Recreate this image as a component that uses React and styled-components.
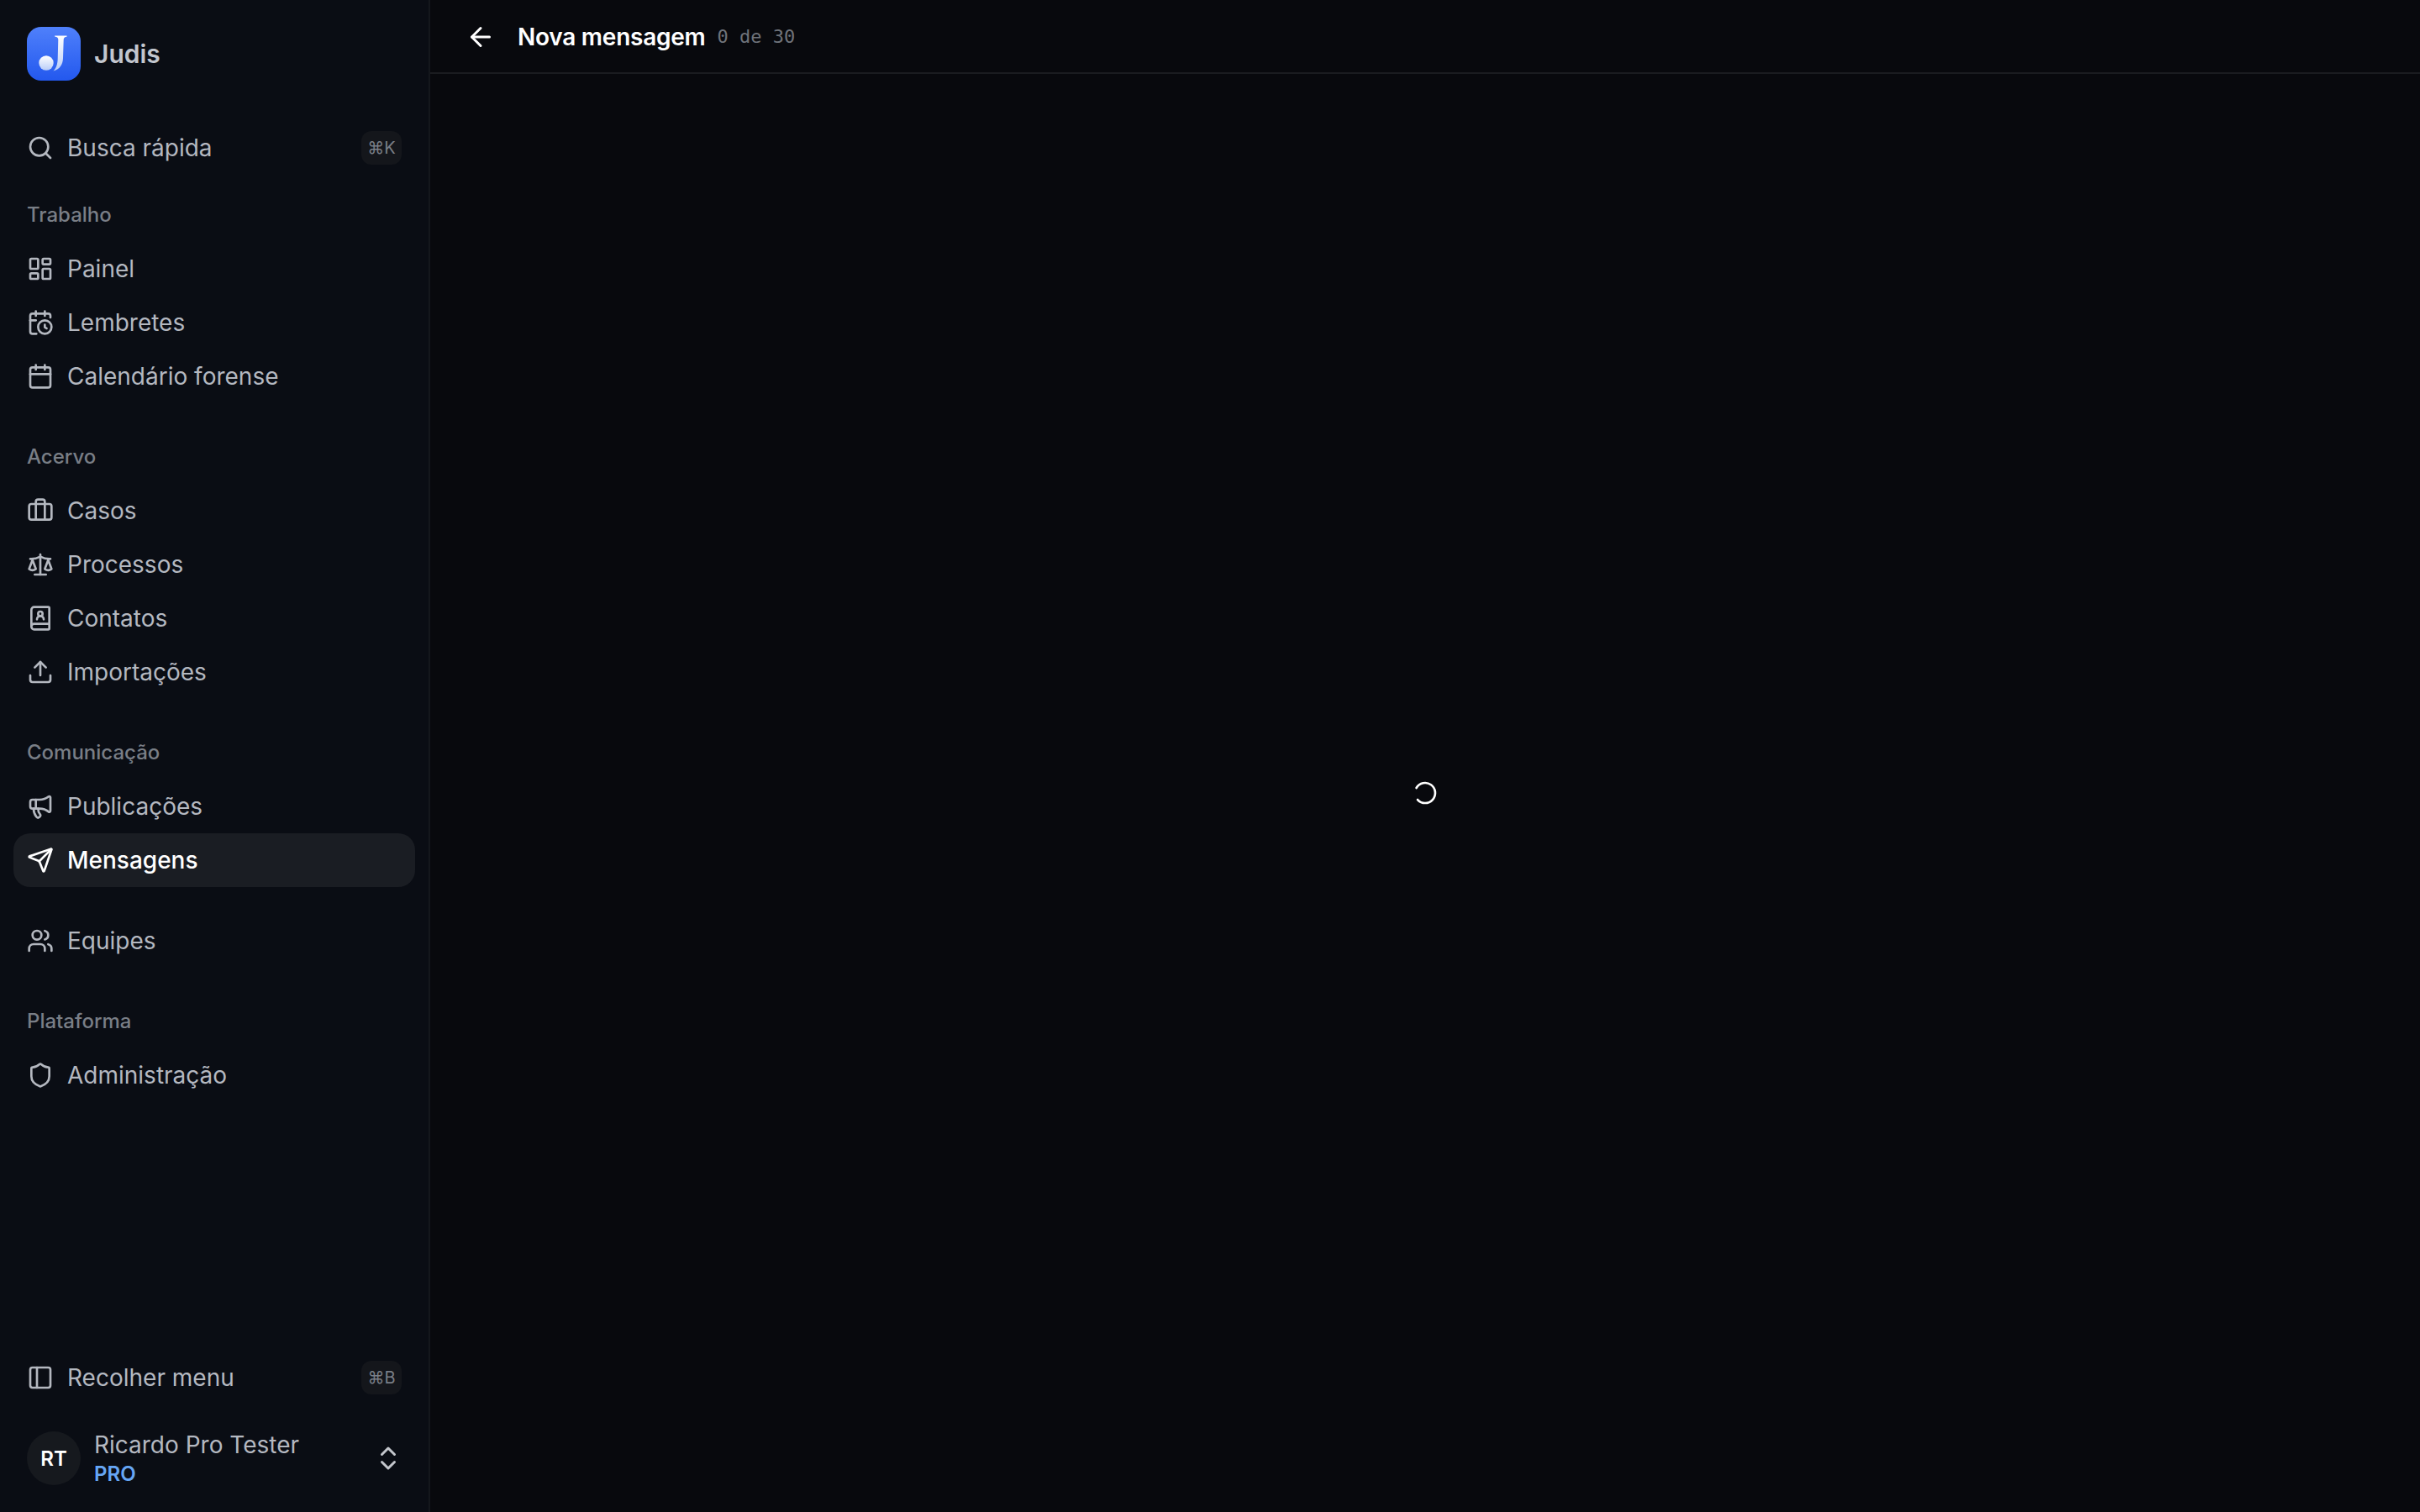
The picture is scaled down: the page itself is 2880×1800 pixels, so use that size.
import React from "react";
import styled, { createGlobalStyle } from "styled-components";
import {
  Search, LayoutDashboard, CalendarClock, Calendar, Briefcase, Scale, BookUser, Upload,
  Megaphone, Send, Users, Shield, PanelLeft, ChevronsUpDown, ArrowLeft, LoaderCircle,
} from "lucide-react";

const Global = createGlobalStyle`
  html, body { margin: 0; padding: 0; background: #08090d; }
  * { box-sizing: border-box; }
  body { font-family: Inter, "Noto Sans", sans-serif; -webkit-font-smoothing: antialiased; }
`;

const Shell = styled.div`
  display: flex;
  width: 100%;
  height: 100vh;
  background: #08090d;
  overflow: hidden;
`;
const Sidebar = styled.aside`
  display: flex;
  flex-direction: column;
  flex: 0 0 512px;
  height: 100%;
  padding: 32px 16px 32px;
  background: #0a0d14;
  border-right: 2px solid #14171c;
`;
const Brand = styled.div`
  display: flex;
  align-items: center;
  gap: 16px;
  height: 64px;
  padding-left: 16px;
  margin-bottom: 48px;
`;
const BrandName = styled.span`
  font-size: 30px;
  font-weight: 600;
  color: #c2c6ce;
`;
const Nav = styled.nav`
  display: flex;
  flex-direction: column;
`;
const Section = styled.div`
  display: flex;
  flex-direction: column;
  margin-top: ${(p) => p.$top}px;
`;
const SectionLabel = styled.div`
  display: flex;
  align-items: center;
  height: 64px;
  padding: 0 0 2px 16px;
  font-size: 24px;
  font-weight: 500;
  color: #797e86;
`;
const Item = styled.div`
  display: flex;
  align-items: center;
  gap: 16px;
  height: 64px;
  padding: 0 16px;
  border-radius: 20px;
  font-size: 28px;
  font-weight: ${(p) => (p.$active ? 500 : 400)};
  color: ${(p) => (p.$active ? "#ffffff" : "#b4b8c0")};
  background: ${(p) => (p.$active ? "#1a1d23" : "transparent")};
  svg { flex: 0 0 32px; }
`;
const ItemText = styled.span`
  flex: 1;
  white-space: nowrap;
`;
const Kbd = styled.kbd`
  display: flex;
  align-items: center;
  justify-content: center;
  width: 48px;
  height: 40px;
  border-radius: 12px;
  background: #14161b;
  color: #797e86;
  font-family: Inter, "DejaVu Sans", sans-serif;
  font-size: 20px;
`;
const Footer = styled.div`
  display: flex;
  flex-direction: column;
  gap: 32px;
  margin-top: auto;
`;
const UserRow = styled.div`
  display: flex;
  align-items: center;
  gap: 16px;
  height: 64px;
  padding: 0 14px 0 16px;
`;
const Avatar = styled.div`
  display: flex;
  align-items: center;
  justify-content: center;
  flex: 0 0 64px;
  height: 64px;
  border-radius: 50%;
  background: #16191e;
  color: #ffffff;
  font-size: 24px;
  font-weight: 600;
`;
const UserInfo = styled.div`
  display: flex;
  flex-direction: column;
  flex: 1;
`;
const UserName = styled.span`
  font-size: 28px;
  line-height: 38px;
  color: #b4b8c0;
  white-space: nowrap;
`;
const Plan = styled.span`
  font-size: 24px;
  line-height: 32px;
  font-weight: 600;
  color: #66a6f5;
`;
const Main = styled.main`
  display: flex;
  flex-direction: column;
  flex: 1;
  min-width: 0;
`;
const Header = styled.header`
  display: flex;
  align-items: center;
  flex: 0 0 88px;
  padding: 1px 42px 0;
  border-bottom: 2px solid #1a1c20;
`;
const Title = styled.h1`
  margin: 0 0 0 26px;
  font-size: 28px;
  font-weight: 600;
  letter-spacing: -0.25px;
  color: #ffffff;
`;
const Counter = styled.span`
  margin-left: 14px;
  font-family: "DejaVu Sans Mono", monospace;
  font-size: 22px;
  color: #6f737a;
`;
const Body = styled.div`
  display: flex;
  flex: 1;
  align-items: center;
  justify-content: center;
  svg { transform: rotate(210deg); }
`;

function Logo() {
  return (
    <svg width="64" height="64" viewBox="0 0 64 64">
      <defs>
        <linearGradient id="lg" x1="0" y1="0" x2="0" y2="1">
          <stop offset="0" stopColor="#4f80fb" />
          <stop offset="1" stopColor="#2358ee" />
        </linearGradient>
        <linearGradient id="lj" x1="0" y1="0" x2="0" y2="1">
          <stop offset="0" stopColor="#ffffff" />
          <stop offset="1" stopColor="#b9cdf8" />
        </linearGradient>
      </defs>
      <rect width="64" height="64" rx="17" fill="url(#lg)" />
      <path d="M33 10.5h14.500v1.300c-2.600.3-3.600 1.200-3.800 3.500l-.7 22c-.3 7.500-3.500 13-11.500 15.300 3.300-3.400 5-7.800 5.200-14.500l.6-22.800c0-2.200-1.200-3.200-3.800-3.500z" fill="url(#lj)" />
      <circle cx="23" cy="43" r="8.700" fill="url(#lj)" />
    </svg>
  );
}

const groups = [
  { top: 16, label: "Trabalho", items: [["Painel", LayoutDashboard], ["Lembretes", CalendarClock], ["Calendário forense", Calendar]] },
  { top: 32, label: "Acervo", items: [["Casos", Briefcase], ["Processos", Scale], ["Contatos", BookUser], ["Importações", Upload]] },
  { top: 32, label: "Comunicação", items: [["Publicações", Megaphone], ["Mensagens", Send, true]] },
  { top: 32, items: [["Equipes", Users]] },
  { top: 32, label: "Plataforma", items: [["Administração", Shield]] },
];

export default function App() {
  return (
    <Shell>
      <Global />
      <Sidebar>
        <Brand>
          <Logo />
          <BrandName>Judis</BrandName>
        </Brand>
        <Nav>
          <Item>
            <Search size={32} strokeWidth={2} />
            <ItemText>Busca rápida</ItemText>
            <Kbd>⌘K</Kbd>
          </Item>
          {groups.map((g, i) => (
            <Section key={i} $top={g.top}>
              {g.label && <SectionLabel>{g.label}</SectionLabel>}
              {g.items.map(([text, Icon, active]) => (
                <Item key={text} $active={active}>
                  <Icon size={32} strokeWidth={2} />
                  <ItemText>{text}</ItemText>
                </Item>
              ))}
            </Section>
          ))}
        </Nav>
        <Footer>
          <Item>
            <PanelLeft size={32} strokeWidth={2} />
            <ItemText>Recolher menu</ItemText>
            <Kbd>⌘B</Kbd>
          </Item>
          <UserRow>
            <Avatar>RT</Avatar>
            <UserInfo>
              <UserName>Ricardo Pro Tester</UserName>
              <Plan>PRO</Plan>
            </UserInfo>
            <ChevronsUpDown size={36} strokeWidth={2} color="#c4c7cd" />
          </UserRow>
        </Footer>
      </Sidebar>
      <Main>
        <Header>
          <ArrowLeft size={36} strokeWidth={2} color="#ffffff" />
          <Title>Nova mensagem</Title>
          <Counter>0 de 30</Counter>
        </Header>
        <Body>
          <LoaderCircle size={32} strokeWidth={2} color="#ffffff" />
        </Body>
      </Main>
    </Shell>
  );
}
